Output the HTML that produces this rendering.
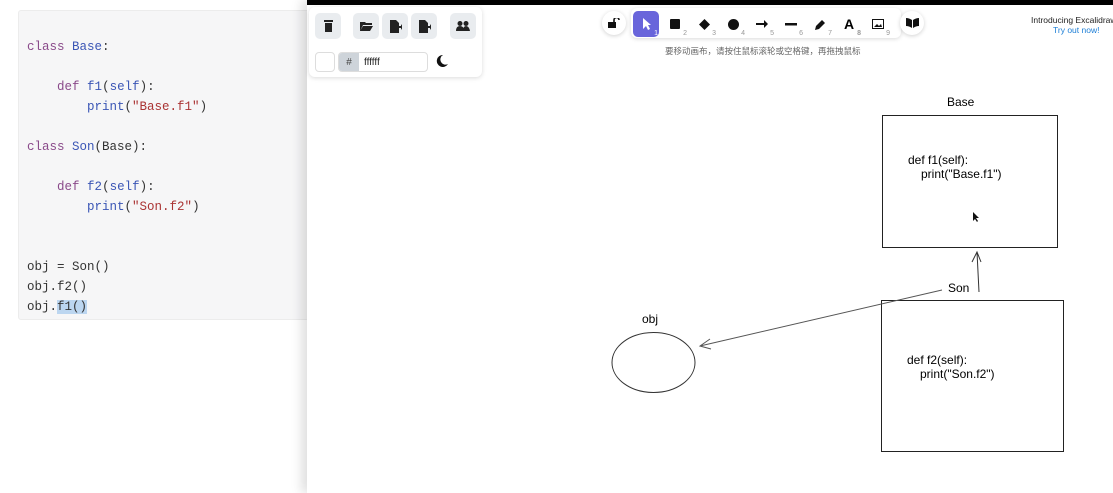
<!DOCTYPE html>
<html><head><meta charset="utf-8"><style>
*{margin:0;padding:0;box-sizing:border-box}
body{width:1113px;height:493px;overflow:hidden;background:#fff;position:relative;font-family:"Liberation Sans","Noto Sans CJK SC",sans-serif}
.code{position:absolute;left:18px;top:10px;width:300px;height:310px;background:#f6f6f7;border:1px solid #ececec;border-radius:3px}
.code pre{position:absolute;left:8px;top:26px;font-family:"Liberation Mono",monospace;font-size:12.5px;line-height:20px;color:#333}
.k{color:#8a4a8a}.c{color:#3a55b5}.s{color:#a33}.b{color:#3a55b5}
.hl{background:#bcd6f0}
.right{position:absolute;left:307px;top:0;width:806px;height:493px;background:#fff;box-shadow:-6px 0 10px rgba(0,0,0,.12)}
.bar{position:absolute;left:307px;top:0;width:806px;height:5px;background:#000}
.panel{position:absolute;left:309px;top:7px;width:173px;height:70px;background:#fff;border-radius:6px;box-shadow:0 1px 5px rgba(0,0,0,.15)}
.btn{position:absolute;width:26px;height:26px;background:#e9ecef;border-radius:5px;display:flex;align-items:center;justify-content:center}
.tb{position:absolute;left:631px;top:8px;width:270px;height:30px;background:#fff;border-radius:6px;box-shadow:0 1px 4px rgba(0,0,0,.15)}
.tool{position:absolute;top:3px;width:26px;height:26px;display:flex;align-items:center;justify-content:center;font-size:13px}
.tool sub{position:absolute;right:1px;bottom:0;font-size:7px;color:#999}
.circ{position:absolute;width:24px;height:24px;border-radius:12px;background:#fff;box-shadow:0 1px 4px rgba(0,0,0,.18);display:flex;align-items:center;justify-content:center}
</style></head><body>
<div class="code"><pre><span class="k">class</span> <span class="c">Base</span>:

    <span class="k">def</span> <span class="b">f1</span>(<span class="b">self</span>):
        <span class="b">print</span>(<span class="s">"Base.f1"</span>)

<span class="k">class</span> <span class="c">Son</span>(Base):

    <span class="k">def</span> <span class="b">f2</span>(<span class="b">self</span>):
        <span class="b">print</span>(<span class="s">"Son.f2"</span>)


obj = Son()
obj.f2()
obj.<span class="hl">f1()</span></pre></div>
<div class="right"></div>
<div class="bar"></div>
<div class="panel">
 <div class="btn" style="left:6px;top:6px"><svg width="11" height="12"><rect x="1" y="0" width="9" height="2" fill="#222"/><rect x="2" y="3" width="7" height="9" fill="#222"/></svg></div>
 <div class="btn" style="left:44px;top:6px"><svg width="13" height="10"><path d="M0 1h5l1 1h6v2H3L0 10z M3 5h10l-3 5H0z" fill="#222"/></svg></div>
 <div class="btn" style="left:73px;top:6px"><svg width="13" height="13"><path d="M1 0h6l3 3v10H1z" fill="#222"/><path d="M9 6h3v-2l2 3-2 3v-2H9z" fill="#222"/></svg></div>
 <div class="btn" style="left:102px;top:6px"><svg width="13" height="13"><path d="M1 0h6l3 3v10H1z" fill="#222"/><path d="M9 6h3v-2l2 3-2 3v-2H9z" fill="#222"/></svg></div>
 <div class="btn" style="left:141px;top:6px"><svg width="14" height="10"><circle cx="4" cy="2.5" r="2.5" fill="#222"/><circle cx="10" cy="2.5" r="2.5" fill="#222"/><path d="M0 10q0-5 4-5t4 5zM7 10q0-5 3-5t4 5z" fill="#222"/></svg></div>
 <div style="position:absolute;left:6px;top:45px;width:20px;height:20px;border:1px solid #ddd;border-radius:4px"></div>
 <div style="position:absolute;left:29px;top:45px;width:90px;height:20px;border:1px solid #ddd;border-radius:4px;overflow:hidden;font-size:10px">
  <div style="position:absolute;left:0;top:0;width:20px;height:20px;background:#ced4da;text-align:center;line-height:19px;color:#444">#</div>
  <div style="position:absolute;left:25px;top:4px;color:#222">ffffff</div></div>
 <svg style="position:absolute;left:127px;top:48px" width="12" height="12"><path d="M7 0A6 6 0 1 0 12 9A5 5 0 0 1 7 0z" fill="#111"/></svg>
</div>
<div class="circ" style="left:602px;top:11px"><svg width="12" height="10"><rect x="0" y="4" width="8" height="6" fill="#111"/><path d="M6 4V2a2.5 2.5 0 0 1 5 0" stroke="#111" stroke-width="1.6" fill="none"/></svg></div>
<div class="tb">
 <div class="tool" style="left:2px;background:#6965db;border-radius:5px;color:#fff"><svg width="9" height="12"><path d="M1 0v11l3-3 2 4 2-1-2-4h3z" fill="#fff"/></svg><sub style="color:#fff">1</sub></div>
 <div class="tool" style="left:31px"><svg width="10" height="10"><rect width="10" height="10" rx="1" fill="#111"/></svg><sub>2</sub></div>
 <div class="tool" style="left:60px"><svg width="11" height="11"><path d="M5.5 0L11 5.5 5.5 11 0 5.5z" fill="#111"/></svg><sub>3</sub></div>
 <div class="tool" style="left:89px"><svg width="11" height="11"><circle cx="5.5" cy="5.5" r="5.5" fill="#111"/></svg><sub>4</sub></div>
 <div class="tool" style="left:118px"><svg width="12" height="8"><path d="M0 3h8V0l4 4-4 4V5H0z" fill="#111"/></svg><sub>5</sub></div>
 <div class="tool" style="left:147px"><svg width="12" height="3"><rect width="12" height="2.5" fill="#111"/></svg><sub>6</sub></div>
 <div class="tool" style="left:176px"><svg width="11" height="11"><path d="M0 11l1-4 6-6 3 3-6 6z" fill="#111"/></svg><sub>7</sub></div>
 <div class="tool" style="left:205px;font-weight:bold;font-size:14px">A<sub>8</sub></div>
 <div class="tool" style="left:234px"><svg width="12" height="10"><rect x=".5" y=".5" width="11" height="9" fill="none" stroke="#111"/><path d="M2 8l3-3 2 2 2-2 1 3z" fill="#111"/></svg><sub>9</sub></div>
</div>
<div class="circ" style="left:900px;top:11px"><svg width="13" height="10"><path d="M0 0q3 0 6 2v8q-3-2-6-2zM13 0q-3 0-6 2v8q3-2 6-2z" fill="#111"/></svg></div>
<div style="position:absolute;left:665px;top:45px;font-size:8.5px;color:#666">要移动画布，请按住鼠标滚轮或空格键，再拖拽鼠标</div>
<div style="position:absolute;left:1031px;top:15px;font-size:8.5px;color:#222;white-space:nowrap">Introducing Excalidraw</div>
<div style="position:absolute;left:1053px;top:25px;font-size:8.5px;color:#1c7ed6">Try out now!</div>
<svg style="position:absolute;left:0;top:0" width="1113" height="493" font-family="Liberation Sans, sans-serif" font-size="12">
 <rect x="882.5" y="115.5" width="175" height="132" fill="none" stroke="#222" stroke-width="1"/>
 <rect x="881.5" y="300.5" width="182" height="151" fill="none" stroke="#222" stroke-width="1"/>
 <ellipse cx="653.5" cy="362.5" rx="41.5" ry="30" fill="none" stroke="#333"/>
 <path d="M942 290L700 346M710 339L700 346 711 349" stroke="#555" fill="none"/>
 <path d="M979 292L977 252M972 262L977 252 981 262" stroke="#333" fill="none"/>
 <text x="947" y="106">Base</text>
 <text x="908" y="164">def f1(self):</text>
 <text x="921" y="178">print("Base.f1")</text>
 <text x="907" y="364">def f2(self):</text>
 <text x="920" y="378">print("Son.f2")</text>
 <text x="948" y="292">Son</text>
 <text x="642" y="323">obj</text>
 <path d="M973 212v9l2-2 2 3 1-1-2-3h3z" fill="#111"/>
</svg>
</body></html>
